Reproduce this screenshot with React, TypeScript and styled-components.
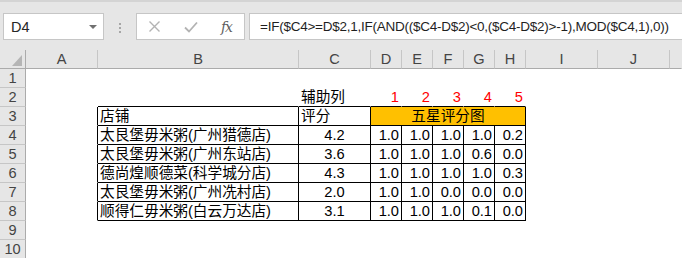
import React from 'react';
import styled, { createGlobalStyle } from 'styled-components';

const GlobalStyle = createGlobalStyle`
  html, body {
    margin: 0;
    padding: 0;
    background: #ffffff;
  }
  body {
    width: 682px;
    height: 258px;
    overflow: hidden;
    font-family: "Liberation Sans", "Noto Sans CJK SC", sans-serif;
  }
`;

const COLS = [26, 72, 201, 72, 31, 31, 31, 31, 31, 72, 72];
// K is only a sliver at the right edge, its letter is out of view
const LETTERS = ['A', 'B', 'C', 'D', 'E', 'F', 'G', 'H', 'I', 'J', ''];

const Page = styled.div`
  display: flex;
  flex-direction: column;
  width: 682px;
`;

const FormulaBar = styled.div`
  display: flex;
  align-items: flex-start;
  height: 50px;
  box-sizing: border-box;
  padding: 13px 0 0 3px;
  background: #e6e6e6;
  border-top: 2px solid #d4d4d4;
`;

const Box = styled.div`
  height: 27px;
  box-sizing: border-box;
  background: #ffffff;
  border: 1px solid #c6c6c6;
  display: flex;
  align-items: center;
`;

const NameBox = styled(Box)`
  width: 101px;
  padding: 0 6px 0 7px;
  justify-content: space-between;
  font-size: 14.5px;
  color: #262626;
  margin-top: -2px;
`;

const Grip = styled.div`
  width: 32px;
  height: 25px;
  display: flex;
  flex-direction: column;
  align-items: center;
  justify-content: center;
  gap: 2px;
  & > span {
    width: 2px;
    height: 2px;
    background: #a6a6a6;
  }
`;

const Tools = styled(Box)`
  width: 109px;
  margin-top: -2px;
  padding: 0 12px 0 11px;
  justify-content: space-between;
`;

const Fx = styled.span`
  font-family: "DejaVu Serif", "Liberation Serif", serif;
  font-style: italic;
  font-size: 14px;
  color: #5f5f5f;
  letter-spacing: -1px;
`;

const FormulaInput = styled(Box)`
  flex: 1;
  margin: -2px 0 0 4px;
  border-right: none;
  padding-left: 10px;
  font-size: 13.5px;
  letter-spacing: -0.25px;
  color: #1f1f1f;
  white-space: nowrap;
  overflow: hidden;
`;

const Sheet = styled.div`
  display: grid;
  grid-template-columns: ${COLS.map((w) => `${w}px`).join(' ')} 1fr;
  grid-auto-rows: 19px;
`;

const HeadCell = styled.div<{ $last?: boolean }>`
  box-sizing: border-box;
  background: #e6e6e6;
  border-right: 1px solid ${(p) => (p.$last ? 'transparent' : '#c6c6c6')};
  border-bottom: 1px solid #ababab;
  display: flex;
  align-items: center;
  justify-content: center;
  font-size: 14.6px;
  color: #444444;
  line-height: 18px;
`;

const Corner = styled(HeadCell)`
  border-right: 1px solid #ababab;
  align-items: flex-end;
  justify-content: flex-end;
  padding: 0 3px 2px 0;
`;

const RowHead = styled.div`
  box-sizing: border-box;
  background: #e6e6e6;
  border-right: 1px solid #ababab;
  border-bottom: 1px solid #c6c6c6;
  display: flex;
  align-items: center;
  justify-content: center;
  font-size: 14.6px;
  color: #444444;
`;

const Cell = styled.div<{
  $right?: boolean;
  $bottom?: boolean;
  $align?: 'left' | 'center' | 'right';
  $bg?: string;
  $color?: string;
  $span?: number;
}>`
  box-sizing: border-box;
  grid-column: span ${(p) => p.$span || 1};
  background: ${(p) => p.$bg || '#ffffff'};
  color: ${(p) => p.$color || '#000000'};
  border-right: 1px solid ${(p) => (p.$right ? '#000000' : 'transparent')};
  border-bottom: 1px solid ${(p) => (p.$bottom ? '#000000' : 'transparent')};
  display: flex;
  align-items: flex-end;
  justify-content: ${(p) =>
    p.$align === 'center' ? 'center' : p.$align === 'right' ? 'flex-end' : 'flex-start'};
  padding: 0 2px 0 2px;
  font-size: 14.67px;
  line-height: 18px;
  white-space: nowrap;
  overflow: hidden;
`;

type CellDef = { text?: string; align?: 'left' | 'center' | 'right'; color?: string; bg?: string; span?: number };

const shops: [string, string, string[]][] = [
  ['太艮堡毋米粥(广州猎德店)', '4.2', ['1.0', '1.0', '1.0', '1.0', '0.2']],
  ['太艮堡毋米粥(广州东站店)', '3.6', ['1.0', '1.0', '1.0', '0.6', '0.0']],
  ['德尚煌顺德菜(科学城分店)', '4.3', ['1.0', '1.0', '1.0', '1.0', '0.3']],
  ['太艮堡毋米粥(广州冼村店)', '2.0', ['1.0', '1.0', '0.0', '0.0', '0.0']],
  ['顺得仁毋米粥(白云万达店)', '3.1', ['1.0', '1.0', '1.0', '0.1', '0.0']],
];

// one entry per column A..K (merged cells take several columns)
const buildRow = (r: number): CellDef[] => {
  const blank = (): CellDef => ({});
  const tail = [blank(), blank(), blank()];
  if (r === 2) {
    return [
      blank(),
      blank(),
      { text: '辅助列' },
      ...['1', '2', '3', '4', '5'].map((t) => ({ text: t, align: 'right' as const, color: '#ff0000' })),
      ...tail,
    ];
  }
  if (r === 3) {
    return [
      blank(),
      { text: '店铺' },
      { text: '评分' },
      { text: '五星评分图', align: 'center', bg: '#ffc000', span: 5 },
      ...tail,
    ];
  }
  if (r >= 4 && r <= 8) {
    const [name, score, vals] = shops[r - 4];
    return [
      blank(),
      { text: name },
      { text: score, align: 'center' },
      ...vals.map((v) => ({ text: v, align: 'right' as const })),
      ...tail,
    ];
  }
  return Array.from({ length: 11 }, blank);
};

const CloseIcon = () => (
  <svg width="13" height="13" viewBox="0 0 13 13">
    <path d="M1.5 1.5 L11.5 11.5 M11.5 1.5 L1.5 11.5" stroke="#b3b3b3" strokeWidth="1.4" fill="none" />
  </svg>
);

const CheckIcon = () => (
  <svg width="14" height="12" viewBox="0 0 14 12">
    <path d="M1 6.5 L5 10.5 L13 1.5" stroke="#b3b3b3" strokeWidth="1.8" fill="none" />
  </svg>
);

const DropArrow = () => (
  <svg width="8" height="4" viewBox="0 0 8 4">
    <path d="M0 0 L8 0 L4 4 Z" fill="#707070" />
  </svg>
);

const SelectAll = () => (
  <svg width="10" height="11" viewBox="0 0 10 11">
    <path d="M10 0 L10 11 L0 11 Z" fill="#b5b5b5" />
  </svg>
);

const App: React.FC = () => {
  const rows = Array.from({ length: 10 }, (_, i) => i + 1);
  return (
    <Page>
      <GlobalStyle />
      <FormulaBar>
        <NameBox>
          <span>D4</span>
          <DropArrow />
        </NameBox>
        <Grip>
          <span />
          <span />
          <span />
        </Grip>
        <Tools>
          <CloseIcon />
          <CheckIcon />
          <Fx>fx</Fx>
        </Tools>
        <FormulaInput>=IF($C4&gt;=D$2,1,IF(AND(($C4-D$2)&lt;0,($C4-D$2)&gt;-1),MOD($C4,1),0))</FormulaInput>
      </FormulaBar>
      <Sheet>
        <Corner>
          <SelectAll />
        </Corner>
        {LETTERS.map((l, i) => (
          <HeadCell key={i} $last={i === LETTERS.length - 1}>
            {l}
          </HeadCell>
        ))}
        {rows.map((r) => {
          let col = 0;
          return (
            <React.Fragment key={r}>
              <RowHead>{r}</RowHead>
              {buildRow(r).map((c, i) => {
                const start = col;
                const span = c.span || 1;
                col += span;
                const end = start + span - 1;
                const right = r >= 3 && r <= 8 && end <= 7;
                const bottom = r >= 2 && r <= 8 && start >= 1 && start <= 7;
                return (
                  <Cell
                    key={i}
                    $right={right}
                    $bottom={bottom}
                    $align={c.align}
                    $color={c.color}
                    $bg={c.bg}
                    $span={span}
                  >
                    {c.text}
                  </Cell>
                );
              })}
            </React.Fragment>
          );
        })}
      </Sheet>
    </Page>
  );
};

export default App;
